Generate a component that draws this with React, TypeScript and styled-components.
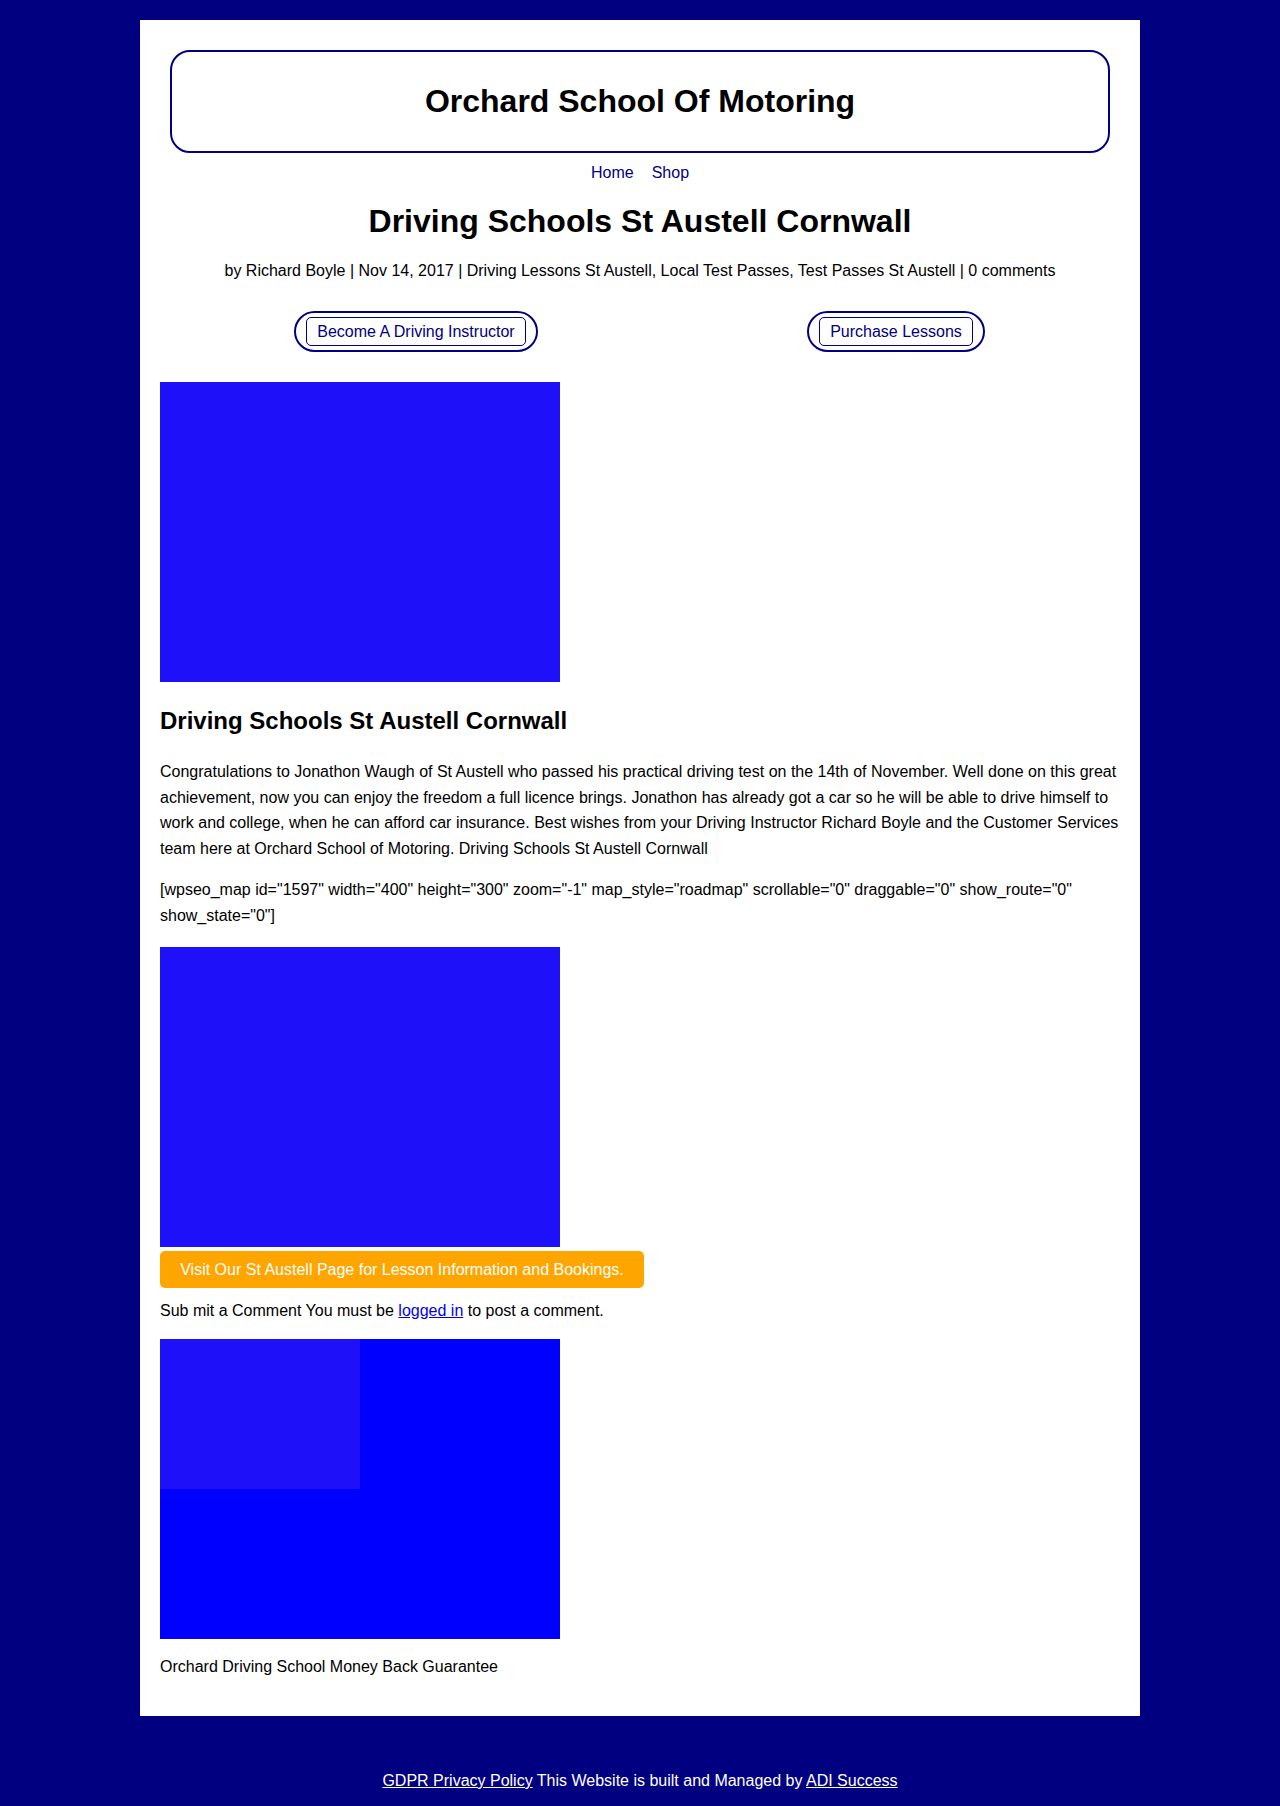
import React from "react";
import styled, { createGlobalStyle } from "styled-components";

const GlobalStyle = createGlobalStyle`
  html, body {
    margin: 0;
    padding: 0;
  }
  body {
    background: #000080;
    font-family: "Liberation Sans", Arial, Helvetica, sans-serif;
    font-size: 16px;
    color: #000;
  }
  * { box-sizing: border-box; }
`;

const Page = styled.div`
  padding-top: 20px;
`;

const Container = styled.main`
  width: 1000px;
  margin: 0 auto;
  background: #fff;
  padding: 30px 20px 36px;
`;

const HeaderBox = styled.header`
  margin: 0 10px;
  border: 2px solid #000080;
  border-radius: 20px;
  padding: 30px 0;
  text-align: center;
`;

const SiteTitle = styled.div`
  font-size: 32px;
  font-weight: bold;
  line-height: 39px;
`;

const Nav = styled.nav`
  display: flex;
  justify-content: center;
  gap: 18px;
  margin-top: 10px;
  line-height: 20px;
`;

const NavLink = styled.a`
  color: #000080;
  text-decoration: none;
`;

const Title = styled.h1`
  margin: 20px 0 0;
  font-size: 32px;
  line-height: 37px;
  text-align: center;
`;

const Meta = styled.p`
  margin: 22px 0 0;
  line-height: 18px;
  text-align: center;
`;

const ButtonRow = styled.div`
  margin-top: 31px;
  display: grid;
  grid-template-columns: 1fr 1fr;
`;

const ButtonCell = styled.div`
  display: flex;
  justify-content: center;
  padding-left: 32px;
`;

const Pill = styled.div`
  display: inline-flex;
  border: 2px solid #000080;
  border-radius: 999px;
  padding: 4px 10px;
`;

const PillButton = styled.a`
  display: block;
  border: 1px solid #000080;
  border-radius: 5px;
  padding: 4px 10px;
  line-height: 19px;
  color: #000080;
  text-decoration: none;
`;

const Block = styled.div<{ $color: string; $top: number }>`
  width: 400px;
  height: 300px;
  margin-top: ${(p) => p.$top}px;
  background: ${(p) => p.$color};
`;

const Inset = styled.div`
  width: 200px;
  height: 150px;
  background: #1e10f8;
`;

const SubTitle = styled.h2`
  margin: 25px 0 0;
  font-size: 24px;
  line-height: 28px;
`;

const Para = styled.p<{ $top: number }>`
  margin: ${(p) => p.$top}px 0 0;
  line-height: 25.6px;
`;

const OrangeButton = styled.a`
  display: inline-block;
  margin-top: 4px;
  background: #ffa500;
  color: #fff;
  border-radius: 5px;
  padding: 9px 20px;
  line-height: 19px;
  width: 484px;
  text-align: center;
  text-decoration: none;
`;

const InlineLink = styled.a`
  color: #0000ee;
  text-decoration: underline;
`;

const Footer = styled.footer`
  padding: 56px 0 16px;
  text-align: center;
  color: #fff;
  line-height: 18px;
`;

const FooterLink = styled.a`
  color: #fff;
  text-decoration: underline;
`;

export default function App() {
  return (
    <>
      <GlobalStyle />
      <Page>
        <Container>
          <HeaderBox>
            <SiteTitle>Orchard School Of Motoring</SiteTitle>
          </HeaderBox>
          <Nav>
            <NavLink href="#">Home</NavLink>
            <NavLink href="#">Shop</NavLink>
          </Nav>
          <Title>Driving Schools St Austell Cornwall</Title>
          <Meta>
            by Richard Boyle | Nov 14, 2017 | Driving Lessons St Austell, Local Test Passes, Test Passes St Austell | 0 comments
          </Meta>
          <ButtonRow>
            <ButtonCell>
              <Pill>
                <PillButton href="#">Become A Driving Instructor</PillButton>
              </Pill>
            </ButtonCell>
            <ButtonCell>
              <Pill>
                <PillButton href="#">Purchase Lessons</PillButton>
              </Pill>
            </ButtonCell>
          </ButtonRow>
          <Block $color="#1e10f8" $top={30} />
          <SubTitle>Driving Schools St Austell Cornwall</SubTitle>
          <Para $top={24}>
            Congratulations to Jonathon Waugh of St Austell who passed his practical driving test on the 14th of November. Well done on this great achievement, now you can enjoy the freedom a full licence brings. Jonathon has already got a car so he will be able to drive himself to work and college, when he can afford car insurance. Best wishes from your Driving Instructor Richard Boyle and the Customer Services team here at Orchard School of Motoring. Driving Schools St Austell Cornwall
          </Para>
          <Para $top={16}>
            [wpseo_map id="1597" width="400" height="300" zoom="-1" map_style="roadmap" scrollable="0" draggable="0" show_route="0" show_state="0"]
          </Para>
          <Block $color="#1e10f8" $top={18} />
          <OrangeButton href="#">Visit Our St Austell Page for Lesson Information and Bookings.</OrangeButton>
          <Para $top={10}>
            Sub mit a Comment You must be <InlineLink href="#">logged in</InlineLink> to post a comment.
          </Para>
          <Block $color="#0000ff" $top={16}>
            <Inset />
          </Block>
          <Para $top={15}>Orchard Driving School Money Back Guarantee</Para>
        </Container>
        <Footer>
          <FooterLink href="#">GDPR Privacy Policy</FooterLink> This Website is built and Managed by{" "}
          <FooterLink href="#">ADI Success</FooterLink>
        </Footer>
      </Page>
    </>
  );
}
